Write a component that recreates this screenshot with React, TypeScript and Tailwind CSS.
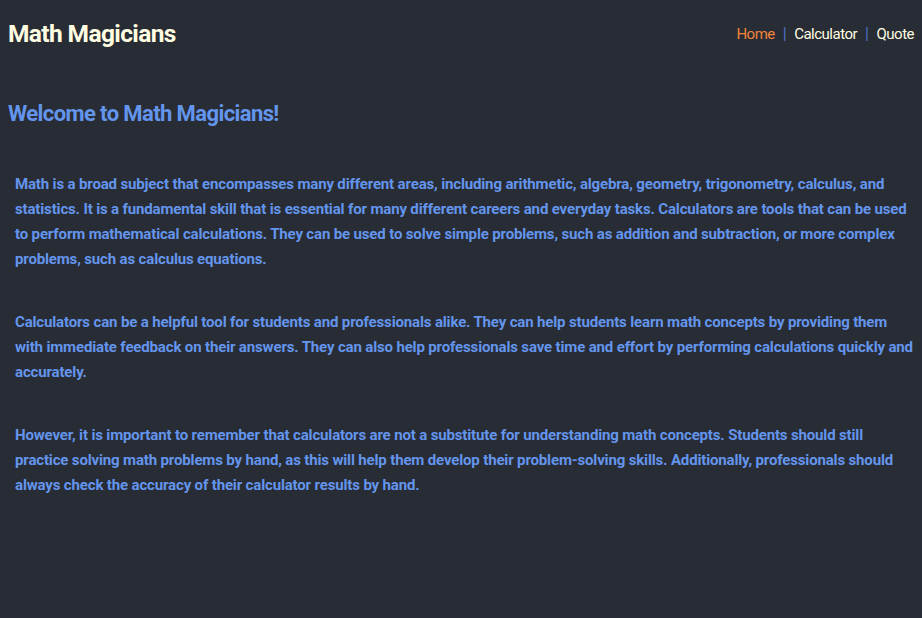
const paragraphs = [
  "Math is a broad subject that encompasses many different areas, including arithmetic, algebra, geometry, trigonometry, calculus, and statistics. It is a fundamental skill that is essential for many different careers and everyday tasks. Calculators are tools that can be used to perform mathematical calculations. They can be used to solve simple problems, such as addition and subtraction, or more complex problems, such as calculus equations.",
  "Calculators can be a helpful tool for students and professionals alike. They can help students learn math concepts by providing them with immediate feedback on their answers. They can also help professionals save time and effort by performing calculations quickly and accurately.",
  "However, it is important to remember that calculators are not a substitute for understanding math concepts. Students should still practice solving math problems by hand, as this will help them develop their problem-solving skills. Additionally, professionals should always check the accuracy of their calculator results by hand.",
];

const links = ["Home", "Calculator", "Quote"];

export default function App() {
  return (
    <div className="min-h-screen bg-[#282c34] font-['Roboto',sans-serif]">
      <header className="flex h-[68px] items-center justify-between px-2">
        <h1 className="text-[24.5px] font-bold tracking-tight text-[#fffde1]">Math Magicians</h1>
        <nav className="flex items-center text-[15px] tracking-[-0.5px]">
          {links.map((link, i) => (
            <div key={link} className="flex items-center">
              {i > 0 && <span className="px-[8px] text-[16px] text-[#4a72c8]">|</span>}
              <a href="#" className={i === 0 ? "text-[#f0843c]" : "text-[#fffde1]"}>
                {link}
              </a>
            </div>
          ))}
        </nav>
      </header>
      <main>
        <h2 className="mt-[30px] px-2 text-[22px] leading-[32px] font-bold tracking-[-0.6px] text-[#6495ed]">
          Welcome to Math Magicians!
        </h2>
        <div className="mt-[42px] pl-[15px] pr-[7px]">
          {paragraphs.map((p, i) => (
            <p key={i} className="mb-[38px] text-[15px] leading-[25px] font-bold tracking-[-0.15px] text-[#6495ed]">
              {p}
            </p>
          ))}
        </div>
      </main>
    </div>
  );
}
